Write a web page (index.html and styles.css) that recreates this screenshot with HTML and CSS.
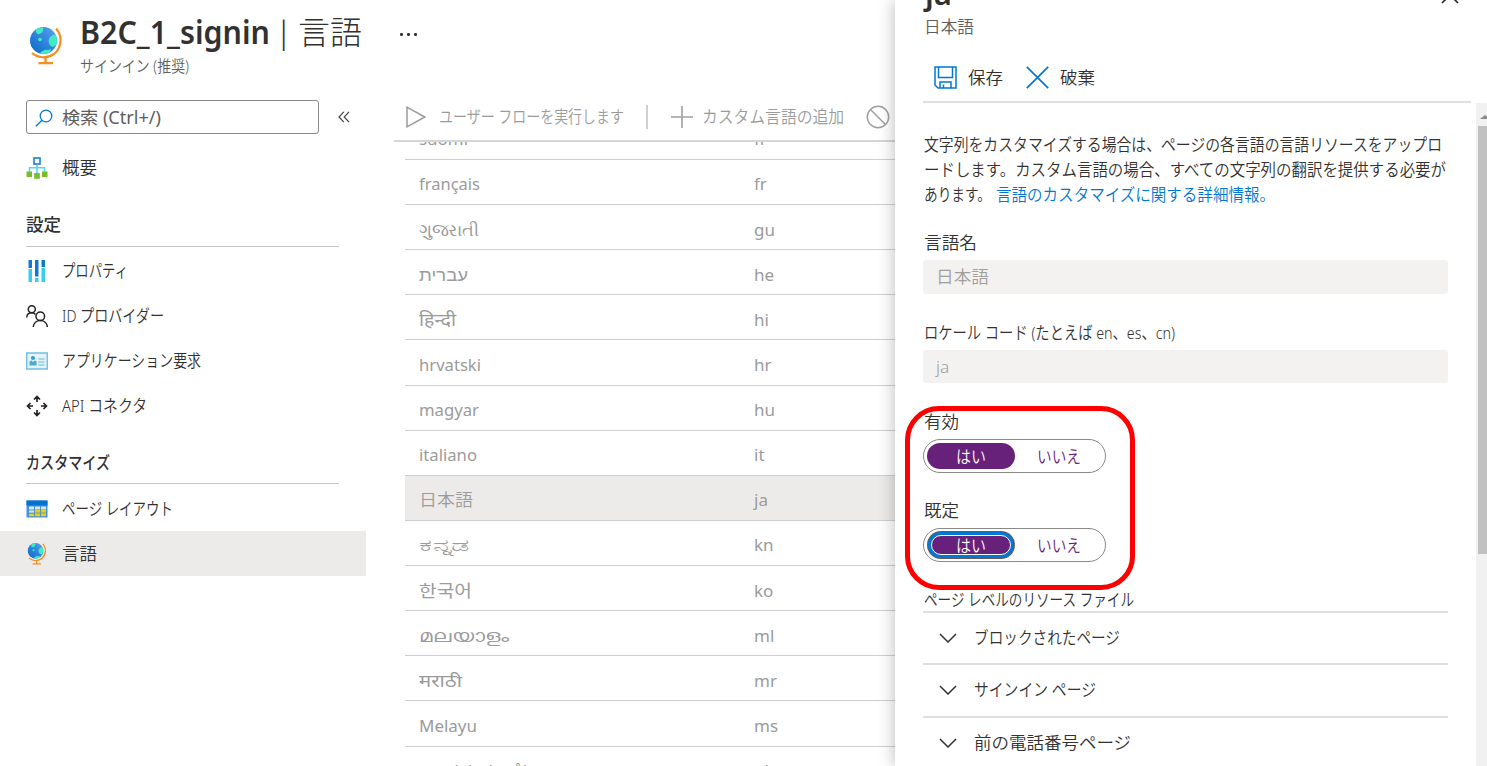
FILE: index.html
```html
<!DOCTYPE html>
<html lang="ja">
<head>
<meta charset="UTF-8">
<meta name="viewport" content="width=device-width, initial-scale=1.0">
<title>B2C_1_signin | 言語</title>
<link rel="stylesheet" href="styles.css">
</head>
<body>
<svg width="0" height="0" class="defs">
  <defs>
    <linearGradient id="sea" x1="1" y1="0" x2="0" y2="1">
      <stop offset="0" stop-color="#5ea0ef"/>
      <stop offset="1" stop-color="#0669c8"/>
    </linearGradient>
    <clipPath id="ball"><circle cx="13.5" cy="13.5" r="13.5"/></clipPath>
    <symbol id="globe" viewBox="0 0 32 38">
      <circle cx="13.5" cy="13.5" r="13.5" fill="url(#sea)"/>
      <g clip-path="url(#ball)" fill="#3debc7">
        <path d="M6 2 L13 0 L13 4 Q11 8 8 7 Q5 6 6 2Z"/>
        <path d="M27 7 Q19 8 18.5 14 Q19 19 23 20 L28 17Z"/>
        <path d="M10 28 Q10 24 13 24 Q15 22 18 23 L21 22 L20 28Z"/>
        <circle cx="10" cy="12.500" r="1.800"/>
      </g>
      <path d="M26 1.500 C33 9 31.500 21 24 27 C17 32 8 31 2 26" fill="none" stroke="#f78d1e" stroke-width="2.200"/>
      <path d="M15.500 30v5.500M8.500 36.200h14.500" stroke="#f78d1e" stroke-width="2.300" fill="none"/>
    </symbol>
    <symbol id="chev" viewBox="0 0 18 10"><path d="M1 1l8 8 8-8" fill="none" stroke="#323130" stroke-width="1.500"/></symbol>
  </defs>
</svg>

<div class="blade">
  <header class="blade-header">
    <svg class="blade-icon"><use href="#globe"/></svg>
    <div class="blade-titles">
      <h1><span class="fit semi" data-w="190">B2C_1_signin</span><span class="thin bar">|</span><span class="fit thin" data-w="64">言語</span></h1>
      <p><span class="fit" data-w="109">サインイン (推奨)</span></p>
    </div>
    <span class="more"><i></i><i></i><i></i></span>
  </header>

  <div class="blade-body">
    <nav class="menu">
      <div class="search-row">
        <div class="search">
          <svg width="18" height="18" viewBox="0 0 18 18" fill="none" stroke="#0078d4" stroke-width="1.300"><circle cx="11" cy="7" r="5.800"/><path d="M7 11.200L.8 17.300"/></svg>
          <span class="fit" data-w="99">検索 (Ctrl+/)</span>
        </div>
        <svg class="collapse" width="12" height="12" viewBox="0 0 12 12" fill="none" stroke="#444" stroke-width="1.200"><path d="M5.800.8L1 6l4.800 5.200M11 .8L6.200 6 11 11.200"/></svg>
      </div>
      <a class="item">
        <svg class="ico" viewBox="0 0 22 22"><path d="M11 8v8M3.500 15v-4.300h15V15" fill="none" stroke="#50d5f5" stroke-width="1.500"/><rect x="8" y="1" width="6" height="6" fill="#fff" stroke="#1b7fd6" stroke-width="1.600"/><path d="M.5 14.500H6v5.500H.5zM8.200 16h5.600v5.800H8.200zM16 14.500h5.500V20H16z" fill="#76bc2d"/></svg>
        <span class="fit" data-w="35">概要</span>
      </a>
      <h2><span class="fit" data-w="35">設定</span></h2>
      <a class="item">
        <svg class="ico" viewBox="0 0 22 22"><path d="M2.500 0H6v8H2.500zM9 0h3.500v16.500H9zM15.500 0H19v7h-3.500z" fill="#0f77d4"/><path d="M2.500 9H6v13H2.500zM9 18h3.500v4H9zM15.500 8H19v14h-3.500z" fill="#36cdee"/></svg>
        <span class="fit" data-w="66">プロパティ</span>
      </a>
      <a class="item">
        <svg class="ico" viewBox="0 0 22 22" fill="none" stroke="#222" stroke-width="1.500"><circle cx="5.800" cy="4.300" r="3.500"/><circle cx="14.300" cy="11.200" r="4.300"/><path d="M.7 12.500C.9 9.500 3 7.800 5.800 7.800c1.500 0 2.800.6 3.700 1.600M7.200 22c.4-4 3.400-6.500 7.100-6.500s6.700 2.500 7.100 6.500"/></svg>
        <span class="fit" data-w="102">ID プロバイダー</span>
      </a>
      <a class="item">
        <svg class="ico" viewBox="0 0 22 22"><rect x=".7" y="3" width="20.600" height="16" fill="#e4f3fa" stroke="#75bfdf" stroke-width="1.500"/><circle cx="7" cy="8" r="2.100" fill="#3a9fcc"/><path d="M3.500 15.500v-4.300l2.200-.8L7 12l1.400-1.600 2.200.8v4.300z" fill="#4eabd4"/><path d="M12.500 9h6M12.500 12h6M12.500 15h6" stroke="#8fcbe5" stroke-width="1.400"/></svg>
        <span class="fit" data-w="139">アプリケーション要求</span>
      </a>
      <a class="item">
        <svg class="ico" viewBox="0 0 22 22" fill="none" stroke="#222" stroke-width="1.700"><path d="M11 7V2M8 4.500l3-3 3 3M11 15v5M8 17.500l3 3 3-3M7 11H2M4.500 8l-3 3 3 3M15 11h5M17.500 8l3 3-3 3"/></svg>
        <span class="fit" data-w="85">API コネクタ</span>
      </a>
      <h2><span class="fit" data-w="84">カスタマイズ</span></h2>
      <a class="item">
        <svg class="ico" viewBox="0 0 22 22"><path d="M.5 2.500h21v17H.5z" fill="#3f92e5"/><path d="M.5 2.500h21v5H.5z" fill="#0472cf"/><path d="M3 8.500h5v3H3zM9 8.500h5v3H9zM15 8.500h5v3h-5zM3 12.500h5v2.500H3z" fill="#d6e8fa"/><path d="M3 15.500h5v2.800H3zM9 12h5v6.300H9zM15 12h5v6.300h-5z" fill="#e8cf13"/><path d="M3 15h17M8.500 9v10M14.500 9v10" stroke="#5595b8" stroke-width=".8"/></svg>
        <span class="fit" data-w="111">ページ レイアウト</span>
      </a>
      <a class="item active">
        <svg class="ico"><use href="#globe"/></svg>
        <span class="fit" data-w="35">言語</span>
      </a>
    </nav>

    <main class="content">
      <div class="commands">
        <svg width="20" height="22" viewBox="0 0 20 22" fill="none" stroke="#9b9b9b" stroke-width="1.500"><path d="M1 1.200v19.600L18.800 11z"/></svg>
        <span class="fit run" data-w="185">ユーザー フローを実行します</span>
        <i class="sep"></i>
        <svg width="22" height="22" viewBox="0 0 22 22" stroke="#a0a0a0" stroke-width="1.600"><path d="M0 11h22M11 0v22"/></svg>
        <span class="fit add" data-w="142">カスタム言語の追加</span>
        <svg class="ban" width="24" height="24" viewBox="0 0 24 24" fill="none" stroke="#a0a0a0" stroke-width="1.500"><circle cx="12" cy="12" r="10.700"/><path d="M4.500 4.500l15 15"/></svg>
      </div>
      <div class="table">
        <div class="rows">
          <div class="row"><b><span class="fit" data-w="49">suomi</span></b><span>fi</span></div>
          <div class="row"><b><span class="fit" data-w="61">français</span></b><span>fr</span></div>
          <div class="row"><b><span class="fit" data-w="60">ગુજરાતી</span></b><span>gu</span></div>
          <div class="row"><b><span class="fit" data-w="49">עברית</span></b><span>he</span></div>
          <div class="row"><b><span class="fit" data-w="37">हिन्दी</span></b><span>hi</span></div>
          <div class="row"><b><span class="fit" data-w="62">hrvatski</span></b><span>hr</span></div>
          <div class="row"><b><span class="fit" data-w="60">magyar</span></b><span>hu</span></div>
          <div class="row"><b><span class="fit" data-w="58">italiano</span></b><span>it</span></div>
          <div class="row selected"><b><span class="fit" data-w="54">日本語</span></b><span>ja</span></div>
          <div class="row"><b><span class="fit" data-w="51">ಕನ್ನಡ</span></b><span>kn</span></div>
          <div class="row"><b><span class="fit" data-w="53">한국어</span></b><span>ko</span></div>
          <div class="row"><b><span class="fit" data-w="90">മലയാളം</span></b><span>ml</span></div>
          <div class="row"><b><span class="fit" data-w="43">मराठी</span></b><span>mr</span></div>
          <div class="row"><b><span class="fit" data-w="58">Melayu</span></b><span>ms</span></div>
          <div class="row"><b><span class="fit" data-w="108">norsk bokmål</span></b><span>nb</span></div>
        </div>
      </div>
    </main>
  </div>
</div>

<aside class="panel">
  <div class="panel-top">
    <h1>ja</h1>
    <svg width="18" height="18" viewBox="0 0 18 18" stroke="#222" stroke-width="1.600"><path d="M1 1l16 16M17 1L1 17"/></svg>
  </div>
  <p class="panel-sub"><span class="fit" data-w="50">日本語</span></p>
  <div class="panel-commands">
    <svg width="23" height="23" viewBox="0 0 23 23" fill="none" stroke="#0078d4" stroke-width="1.500"><path d="M1 1h21v21H4l-3-3zM4.500 1v10.500h14V1M6 22v-6h11v6M9.500 22v-3.500"/></svg>
    <span class="fit save" data-w="35">保存</span>
    <svg width="23" height="23" viewBox="0 0 23 23" fill="none" stroke="#0078d4" stroke-width="1.700"><path d="M.8.8l21.400 21.400M22.200.8L.8 22.200"/></svg>
    <span class="fit" data-w="35">破棄</span>
  </div>
  <div class="panel-scroll">
    <div class="form">
      <p class="intro">
        <span class="fit" data-w="518">文字列をカスタマイズする場合は、ページの各言語の言語リソースをアップロ</span><br>
        <span class="fit" data-w="522">ードします。カスタム言語の場合、すべての文字列の翻訳を提供する必要が</span><br>
        <span class="fit" data-w="67">あります。</span> <a class="fit" data-w="279">言語のカスタマイズに関する詳細情報。</a>
      </p>
      <label><span class="fit" data-w="53">言語名</span></label>
      <div class="input"><span class="fit" data-w="53">日本語</span></div>
      <label><span class="fit" data-w="251">ロケール コード (たとえば en、es、cn)</span></label>
      <div class="input">ja</div>
      <label><span class="fit" data-w="35">有効</span></label>
      <div class="toggle"><span class="on"><span class="fit" data-w="30">はい</span></span><span class="off"><span class="fit" data-w="44">いいえ</span></span></div>
      <label><span class="fit" data-w="35">既定</span></label>
      <div class="toggle focus"><span class="on"><span class="fit" data-w="30">はい</span></span><span class="off"><span class="fit" data-w="44">いいえ</span></span></div>
      <h3><span class="fit" data-w="210">ページ レベルのリソース ファイル</span></h3>
      <div class="fold"><svg width="18" height="10"><use href="#chev"/></svg><span class="fit" data-w="146">ブロックされたページ</span></div>
      <div class="fold"><svg width="18" height="10"><use href="#chev"/></svg><span class="fit" data-w="122">サインイン ページ</span></div>
      <div class="fold"><svg width="18" height="10"><use href="#chev"/></svg><span class="fit" data-w="157">前の電話番号ページ</span></div>
    </div>
    <div class="scrollbar"><i class="up"></i><i class="thumb"></i></div>
  </div>
  <div class="callout"></div>
</aside>

<script src="labels.js"></script>
</body>
</html>
```
FILE: styles.css
```css
* {
  box-sizing: border-box;
}
body {
  margin: 0;
  width: 1487px;
  height: 766px;
  overflow: hidden;
  position: relative;
  background: #fff;
  color: #323130;
  font-family: "Noto Sans", "Noto Sans CJK JP", sans-serif;
  font-size: 17.3px;
  font-weight: 350;
  line-height: 24px;
}
h1, h2, h3, p {
  margin: 0;
}
svg {
  flex: none;
}
.defs {
  position: absolute;
}
.fit {
  display: inline-block;
  flex: none;
  white-space: nowrap;
  transform-origin: left center;
}

/* header */
.blade-header {
  display: flex;
  height: 100px;
  padding-left: 30px;
}
.blade-icon {
  width: 32px;
  height: 38px;
  margin-top: 27px;
}
.blade-titles {
  width: 338px;
  padding: 11px 0 0 18px;
}
.blade-titles h1 {
  display: flex;
  height: 43px;
  line-height: 42px;
  font-size: 32px;
}
.semi {
  font-weight: 600;
}
.thin {
  font-weight: 300;
}
.bar {
  width: 28px;
  padding-left: 5px;
}
.blade-titles p {
  color: #605e5c;
  font-size: 16px;
}
.more {
  display: flex;
  gap: 4.500px;
  padding-top: 33px;
}
.more i {
  width: 2.500px;
  height: 2.500px;
  border-radius: 50%;
  background: #323130;
}
.blade-body {
  display: flex;
}

/* menu */
.menu {
  width: 366px;
  flex: none;
}
.search-row {
  display: flex;
  align-items: center;
  height: 45px;
  padding: 0 0 11px 26px;
}
.search {
  display: flex;
  align-items: center;
  gap: 9px;
  width: 293px;
  height: 34px;
  padding: 2px 0 0 8px;
  border: 1.300px solid #8a8886;
  border-radius: 3px;
  color: #605e5c;
  font-weight: 400;
}
.collapse {
  margin-left: 19px;
}
.item {
  display: flex;
  align-items: center;
  gap: 14px;
  height: 45.100px;
  padding: 1px 0 0 26px;
}
.ico {
  width: 22px;
  height: 22px;
}
.active {
  background: #edebe9;
}
.menu h2 {
  height: 56.500px;
  margin: 0 27px 1px 26px;
  padding-top: 23px;
  border-bottom: 1px solid #c8c6c4;
  font-size: 17.3px;
  font-weight: 500;
}

/* language list */
.content {
  flex: 1;
  margin-left: 28px;
  color: #9b9b9b;
}
.commands {
  display: flex;
  align-items: center;
  height: 42px;
  padding: 0 0 7px 12px;
  border-bottom: 2px solid #d6d6d6;
}
.run {
  margin-left: 13px;
}
.sep {
  width: 2px;
  height: 24px;
  margin: 0 23px 0 22px;
  background: #d0d0d0;
}
.add {
  margin-left: 9px;
}
.ban {
  margin-left: 22px;
}
.table {
  height: 624px;
  margin-left: 11px;
  overflow: hidden;
}
.rows {
  margin-top: -27.200px;
}
.row {
  display: flex;
  height: 45.130px;
  padding: 12.500px 0 0 14px;
  border-bottom: 1px solid #cfcfcf;
  font-size: 17px;
  font-weight: 400;
}
.row b {
  width: 335px;
  font-weight: inherit;
}
.selected {
  background: #edebe9;
}
.selected b {
  font-weight: 350;
}

/* right panel, lies over the list */
.panel {
  position: absolute;
  top: 0;
  right: 0;
  width: 592px;
  height: 766px;
  background: #fff;
  box-shadow: 0 0 16px rgba(0, 0, 0, .28);
}
.panel-top {
  display: flex;
  justify-content: space-between;
  height: 14px;
  padding: 0 28px 0 30px;
  overflow: hidden;
}
.panel-top h1 {
  margin-top: -29px;
  font-size: 31px;
  line-height: 44px;
  font-weight: 600;
}
.panel-top svg {
  margin-top: -14px;
}
.panel-sub {
  height: 47px;
  padding: 1px 0 0 29px;
  color: #605e5c;
  font-size: 16.500px;
}
.panel-commands {
  display: flex;
  align-items: center;
  height: 42px;
  margin: 0 16px 0 28px;
  padding: 0 0 8px 11px;
  border-bottom: 2px solid #dfdfdf;
}
.panel-commands .fit {
  margin-left: 11px;
  padding-top: 1px;
}
.save + svg {
  margin-left: 23px;
}
.panel-scroll {
  display: flex;
  justify-content: space-between;
  height: 663px;
  overflow: hidden;
}
.form {
  width: 525px;
  margin-left: 28px;
  padding-top: 29px;
}
.intro {
  height: 99px;
  padding-left: 1px;
  line-height: 25px;
  white-space: nowrap;
}
.intro a {
  color: #0078d4;
}
.form label {
  display: block;
  height: 29px;
  padding-left: 1px;
}
.input {
  height: 33.500px;
  margin-bottom: 27px;
  padding: 5px 13px;
  border-radius: 3px;
  background: #f3f2f1;
  color: #a19f9d;
}
.toggle {
  display: flex;
  align-items: center;
  width: 183px;
  height: 34px;
  margin-bottom: 26px;
  padding-left: 3px;
  border: 1.300px solid #8a8886;
  border-radius: 17px;
  color: #68217a;
}
.on, .off {
  display: flex;
  align-items: center;
  justify-content: center;
  width: 88px;
  height: 26px;
  padding-top: 2px;
}
.on {
  border-radius: 13px;
  background: #68217a;
  color: #fff;
}
.focus .on {
  border: 1px solid #fff;
  height: 20px;
  width: 80px;
  margin: 0 4px;
  border-radius: 10px;
  box-shadow: 0 0 0 3px #0078d4, 0 0 0 4px #605e5c;
}
.form h3 {
  height: 25px;
  padding-left: 1px;
  border-bottom: 2px solid #dfdfdf;
  font-size: 17.3px;
  font-weight: inherit;
  line-height: 24px;
}
.fold {
  display: flex;
  align-items: center;
  gap: 17px;
  height: 52.300px;
  padding-left: 16px;
  border-bottom: 2px solid #dfdfdf;
}
.scrollbar {
  width: 11px;
  background: #f1f1f1;
}
.up {
  display: block;
  width: 0;
  height: 0;
  margin: 12px 0 7px 4px;
  border: 5px solid transparent;
  border-top: 0;
  border-bottom: 4px solid #8a8a8a;
}
.thumb {
  display: block;
  height: 428px;
  margin-left: 2px;
  background: #c1c1c1;
}
.callout {
  position: absolute;
  left: 10px;
  top: 406px;
  width: 230px;
  height: 184px;
  border: 5px solid #f00;
  border-radius: 34px;
}
```
FILE: labels.js
```js
document.querySelectorAll(".fit").forEach(function (el) {
  const natural = el.getBoundingClientRect().width;
  const target = Number(el.dataset.w);
  el.style.transform = "scaleX(" + target / natural + ")";
  el.style.marginRight = target - natural + "px";
});
```
